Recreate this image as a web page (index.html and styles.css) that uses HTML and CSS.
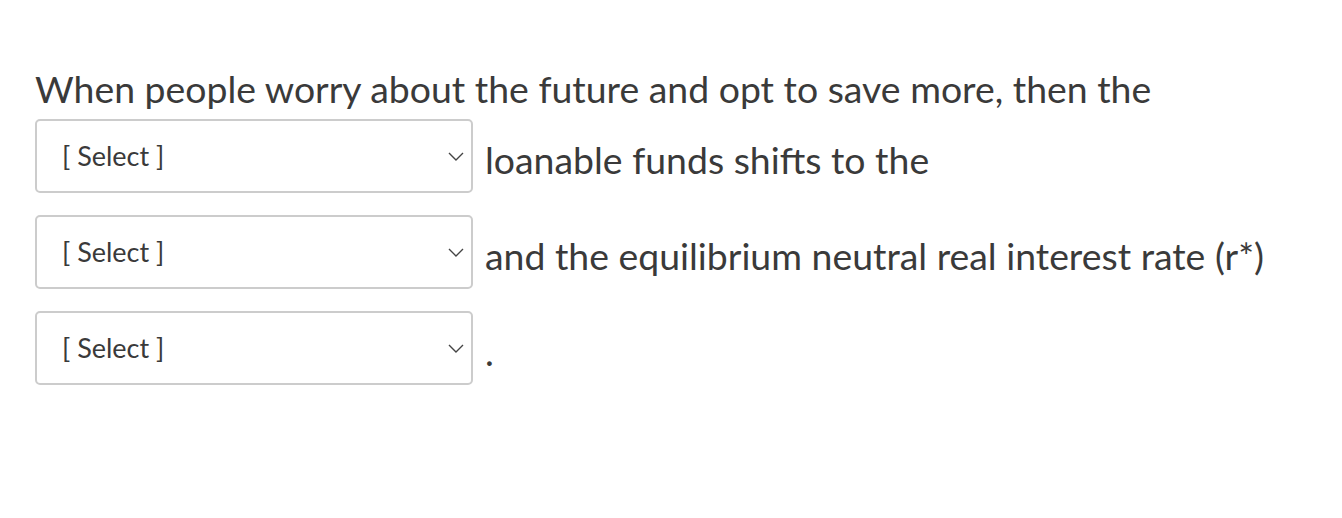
FILE: index.html
```html
<!DOCTYPE html>
<html lang="en">
<head>
<meta charset="utf-8">
<title>Question</title>
<link rel="stylesheet" href="styles.css">
</head>
<body>
<div class="question">
  <p class="lead">When people worry about the future and opt to save more, then the</p>
  <div class="row">
    <div class="select"><span class="select-label">[ Select ]</span><svg class="chevron" viewBox="0 0 16 9" width="16" height="9"><path d="M1 1 L8 8 L15 1" fill="none" stroke="#444" stroke-width="1.4"/></svg></div>
    <span class="after">loanable funds shifts to the</span>
  </div>
  <div class="row">
    <div class="select"><span class="select-label">[ Select ]</span><svg class="chevron" viewBox="0 0 16 9" width="16" height="9"><path d="M1 1 L8 8 L15 1" fill="none" stroke="#444" stroke-width="1.4"/></svg></div>
    <span class="after">and the equilibrium neutral real interest rate (r*)</span>
  </div>
  <div class="row">
    <div class="select"><span class="select-label">[ Select ]</span><svg class="chevron" viewBox="0 0 16 9" width="16" height="9"><path d="M1 1 L8 8 L15 1" fill="none" stroke="#444" stroke-width="1.4"/></svg></div>
    <span class="after">.</span>
  </div>
</div>
</body>
</html>
```
FILE: styles.css
```css
html, body {
  margin: 0;
  padding: 0;
  background: #ffffff;
}
body {
  font-family: Lato, "Open Sans", sans-serif;
  color: #3a3a3a;
}
.question {
  padding: 67px 35px 0 35px;
  display: flex;
  flex-direction: column;
  gap: 22px;
}
.lead {
  margin: 0 0 -14px 0;
  font-size: 37.4px;
  line-height: 44px;
  white-space: nowrap;
}
.row {
  display: flex;
  align-items: flex-start;
}
.select {
  box-sizing: border-box;
  width: 438px;
  height: 74px;
  border: 2px solid #cccccc;
  border-radius: 5px;
  display: flex;
  align-items: center;
  justify-content: space-between;
  padding: 0 7px 0 25px;
  flex-shrink: 0;
}
.select-label {
  font-size: 27px;
  line-height: 32px;
  margin-top: 0;
}
.chevron {
  display: block;
}
.after {
  margin-left: 12px;
  margin-top: 19px;
  font-size: 37.4px;
  line-height: 44px;
  white-space: nowrap;
}
```
